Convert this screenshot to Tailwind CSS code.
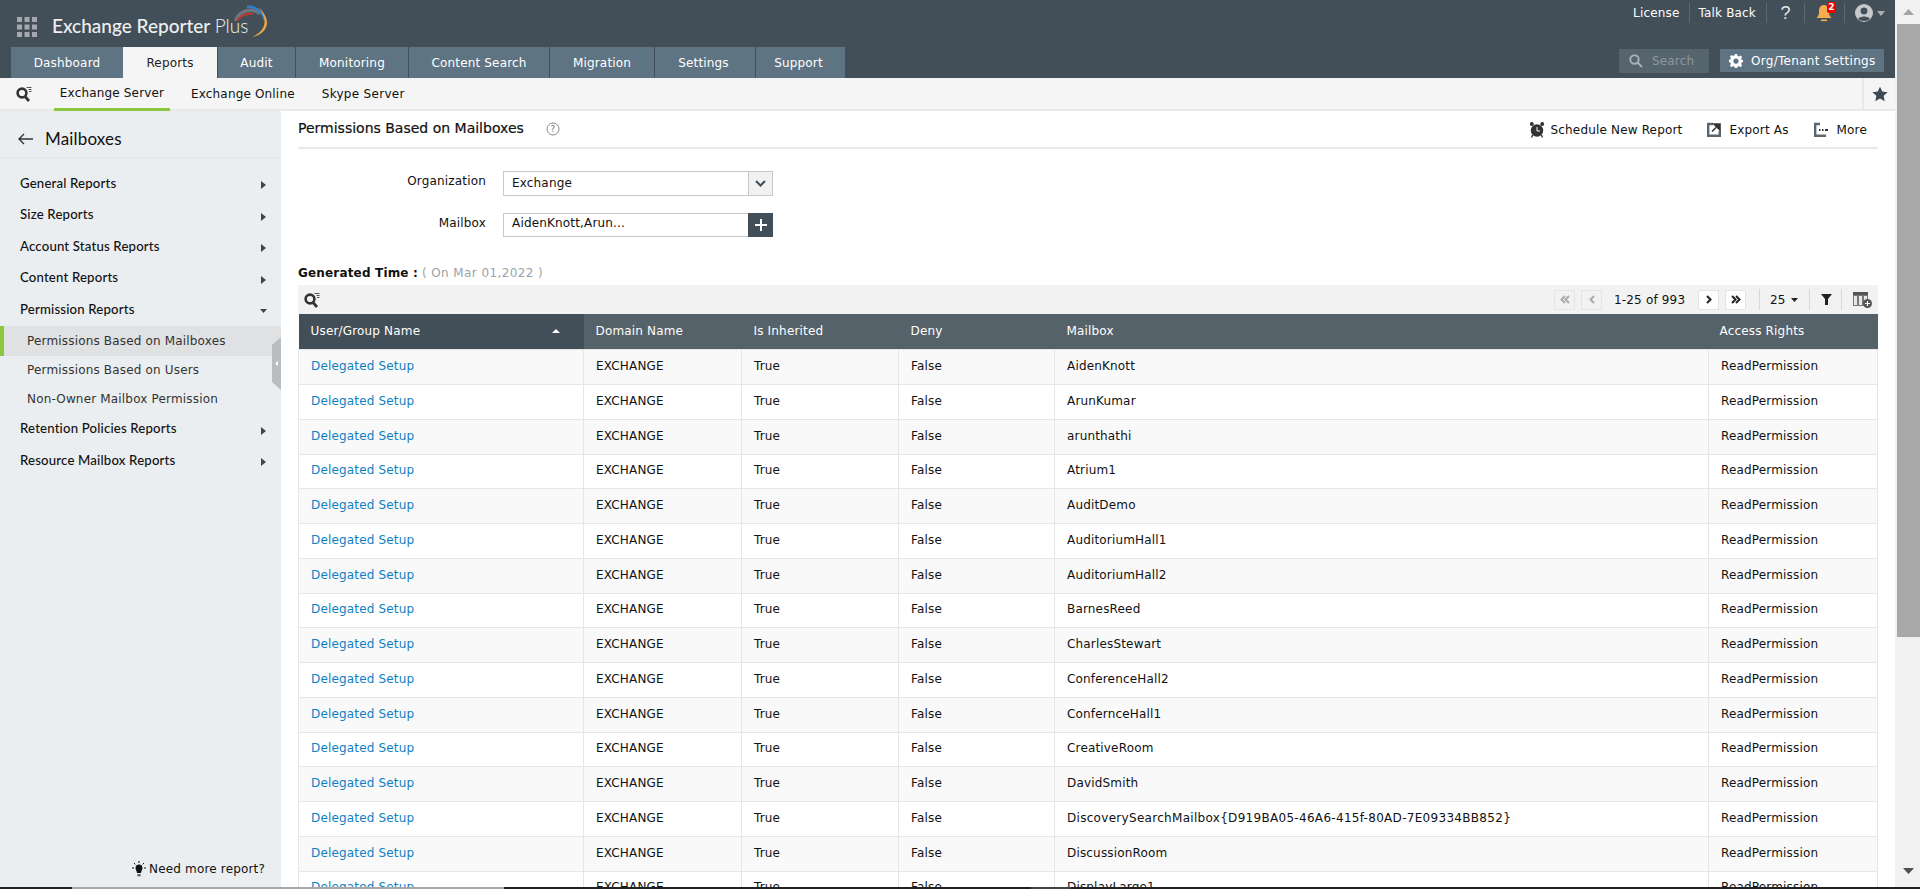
<!DOCTYPE html>
<html>
<head>
<meta charset="utf-8">
<title>Exchange Reporter Plus</title>
<script src="https://cdn.jsdelivr.net/npm/@tailwindcss/browser@4"></script>
</head>
<body class="relative h-[889px] w-[1920px] overflow-hidden bg-white font-['DejaVu_Sans',sans-serif] text-[12px] tracking-[0.17px] text-[#111]">
<div class="flex h-[889px]">
    <div class="flex w-[1895px] flex-col overflow-hidden">

        <!-- top header -->
        <header class="relative h-[78px] shrink-0 bg-[#434f58]">
            <div class="flex h-[47px] items-center pl-[17px] pt-[6px]">
                <svg width="20" height="20" viewBox="0 0 20 20" fill="#a3a9ae">
                    <rect x="0" y="0" width="5" height="5"/><rect x="7.5" y="0" width="5" height="5"/><rect x="15" y="0" width="5" height="5"/>
                    <rect x="0" y="7.5" width="5" height="5"/><rect x="7.5" y="7.5" width="5" height="5"/><rect x="15" y="7.5" width="5" height="5"/>
                    <rect x="0" y="15" width="5" height="5"/><rect x="7.5" y="15" width="5" height="5"/><rect x="15" y="15" width="5" height="5"/>
                </svg>
                <span class="ml-[15px] font-['Lato',sans-serif] text-[19px] font-medium tracking-normal text-[#eef0f1]">Exchange Reporter <span class="font-light">Plus</span></span>
                <svg class="-ml-[14px] -mt-[10px]" width="34" height="34" viewBox="0 0 34 34" fill="none">
                    <path d="M1.5 16 C4 8 15 1 26 8.5" stroke="#6b7680" stroke-width="3.5"/>
                    <path d="M2.5 16 C7 10 13 8 19 9" stroke="#c0392b" stroke-width="1.8"/>
                    <path d="M13 2 C20 0.5 28 6 31 15" stroke="#2f80c8" stroke-width="2.6"/>
                    <path d="M25 3 C30 7 33 13 33 18 C33 25 26 31 18 32 C25 29 30 24 30.5 18 C31 12 28 7 25 3 Z" fill="#eda73f"/>
                </svg>
            </div>

            <nav class="absolute bottom-0 left-[11px] flex h-[31px] text-[12px] text-white">
                <a class="flex w-[112px] items-center justify-center bg-[#5f7482]">Dashboard</a>
                <a class="flex w-[94px] items-center justify-center bg-[#f5f5f5] text-[#222]">Reports</a>
                <a class="flex w-[78px] items-center justify-center border-l border-[#434f58] bg-[#5f7482]">Audit</a>
                <a class="flex w-[113px] items-center justify-center border-l border-[#434f58] bg-[#5f7482]">Monitoring</a>
                <a class="flex w-[141px] items-center justify-center border-l border-[#434f58] bg-[#5f7482]">Content Search</a>
                <a class="flex w-[105px] items-center justify-center border-l border-[#434f58] bg-[#5f7482]">Migration</a>
                <a class="flex w-[101px] items-center justify-center border-l border-[#434f58] bg-[#5f7482] pr-[3px]">Settings</a>
                <a class="flex w-[90px] items-center justify-center border-l border-[#434f58] bg-[#5f7482] pr-[4px]">Support</a>
            </nav>

            <div class="absolute right-[10px] top-[3px] flex h-[20px] items-center text-[12px] text-white">
                <span class="border-r border-[#5d6972] pr-[9px] leading-[20px]">License</span>
                <span class="border-r border-[#5d6972] pl-[9px] pr-[10px] leading-[20px]">Talk Back</span>
                <span class="flex h-[20px] w-[38px] items-center justify-center border-r border-[#5d6972] font-['Liberation_Sans',sans-serif] text-[18px] text-[#e4e6e8]">?</span>
                <span class="relative flex h-[20px] w-[40px] items-center justify-center border-r border-[#5d6972]">
                    <svg class="-ml-[2px]" width="16" height="20" viewBox="0 0 16 20" fill="#f4ad4d"><path d="M8 2 C4 2 3 5 3 9 C3 12 2 13 0.5 15 L15.5 15 C14 13 13 12 13 9 C13 5 12 2 8 2 Z"/><rect x="5" y="16.5" width="6" height="1.6"/></svg>
                    <span class="absolute left-[22px] top-[-1px] flex h-[11px] w-[9px] items-center justify-center rounded-[2px] bg-[#ee0000] text-[9px] font-bold leading-none text-white">2</span>
                </span>
                <svg class="ml-[10px]" width="18" height="18" viewBox="0 0 18 18"><circle cx="9" cy="9" r="9" fill="#c6cacd"/><circle cx="9" cy="7" r="3.4" fill="#434f58"/><path d="M3 15 C4 11.5 14 11.5 15 15 C13 17.5 5 17.5 3 15 Z" fill="#434f58"/></svg>
                <svg class="ml-[4px]" width="8" height="5" viewBox="0 0 8 5" fill="#a9afb3"><path d="M0 0 H8 L4 5 Z"/></svg>
            </div>

            <div class="absolute right-[11px] top-[49px] flex items-start gap-[11px]">
                <div class="flex h-[24px] w-[90px] items-center gap-[9px] bg-[#56646e] pl-[10px] text-[12px] text-[#8d979e]">
                    <svg width="14" height="14" viewBox="0 0 14 14" fill="none" stroke="#a9afb3" stroke-width="2"><circle cx="5.5" cy="5.5" r="4.2"/><path d="M8.5 8.5 L13 13"/></svg>
                    Search
                </div>
                <div class="flex h-[23px] w-[164px] items-center gap-[8px] bg-[#5f7482] pl-[9px] text-[12px] tracking-[0.3px] text-white">
                    <svg width="14" height="14" viewBox="0 0 24 24" fill="#fff"><path d="M10 0 H14 L14.7 3.3 L17 4.3 L19.9 2.5 L22.5 5.1 L20.7 8 L21.7 10.3 L24 10 V14 L21.7 14.7 L20.7 17 L22.5 19.9 L19.9 22.5 L17 20.7 L14.7 21.7 L14 24 H10 L9.3 21.7 L7 20.7 L4.1 22.5 L1.5 19.9 L3.3 17 L2.3 14.7 L0 14 V10 L2.3 9.3 L3.3 7 L1.5 4.1 L4.1 1.5 L7 3.3 L9.3 2.3 Z M12 7.5 A4.5 4.5 0 1 0 12 16.5 A4.5 4.5 0 1 0 12 7.5 Z" fill-rule="evenodd"/></svg>
                    Org/Tenant Settings
                </div>
            </div>
        </header>

        <!-- sub nav -->
        <div class="flex h-[33px] shrink-0 items-stretch border-b-2 border-[#e6e8e9] bg-[#f5f5f5] text-[12px]">
            <div class="flex w-[54px] items-center pl-[16px]">
                <svg width="16" height="16" viewBox="0 0 16 16" fill="none"><circle cx="6" cy="7" r="4.4" stroke="#333" stroke-width="2.6"/><path d="M9 10.5 L13 15" stroke="#333" stroke-width="2.8"/><path d="M10.5 1.5 H15.5 M12.5 3.5 H15.5 M13 5.5 H15.5" stroke="#555" stroke-width="1"/></svg>
            </div>
            <span class="-mb-[2px] flex w-[116px] items-center justify-center border-b-[3px] border-[#8dc63f]">Exchange Server</span>
            <span class="ml-[21px] flex items-center">Exchange Online</span>
            <span class="ml-[27px] flex items-center tracking-[0.3px]">Skype Server</span>
            <span class="ml-auto flex w-[33px] items-center justify-center border-l-2 border-[#e6e8e9]">
                <svg width="16" height="16" viewBox="0 0 24 24" fill="#3f4a53"><path d="M12 1 L15.4 8.3 L23.4 9.3 L17.5 14.8 L19 22.7 L12 18.8 L5 22.7 L6.5 14.8 L0.6 9.3 L8.6 8.3 Z"/></svg>
            </span>
        </div>

        <div class="flex min-h-0 flex-1">
            <!-- sidebar -->
            <aside class="relative w-[281px] shrink-0 bg-[#ebeef0] font-['Lato',sans-serif] text-[13.2px] font-medium text-[#111]">
                <div class="flex h-[47px] items-center border-b border-[#e2e5e7] pl-[18px] pt-[9px] text-[17px] font-normal">
                    <svg width="15" height="12" viewBox="0 0 15 12" fill="none" stroke="#333" stroke-width="1.4"><path d="M15 6 H1 M6 1 L1 6 L6 11"/></svg>
                    <span class="ml-[12px]">Mailboxes</span>
                </div>
                <div class="pt-[10px]">
                    <div class="flex h-[31.5px] items-center justify-between pl-[20px] pr-[15px]">General Reports<svg class="mt-[3px]" width="5" height="8" viewBox="0 0 5 8" fill="#444"><path d="M0 0 L5 4 L0 8 Z"/></svg></div>
                    <div class="flex h-[31.5px] items-center justify-between pl-[20px] pr-[15px]">Size Reports<svg class="mt-[3px]" width="5" height="8" viewBox="0 0 5 8" fill="#444"><path d="M0 0 L5 4 L0 8 Z"/></svg></div>
                    <div class="flex h-[31.5px] items-center justify-between pl-[20px] pr-[15px]">Account Status Reports<svg class="mt-[3px]" width="5" height="8" viewBox="0 0 5 8" fill="#444"><path d="M0 0 L5 4 L0 8 Z"/></svg></div>
                    <div class="flex h-[31.5px] items-center justify-between pl-[20px] pr-[15px]">Content Reports<svg class="mt-[3px]" width="5" height="8" viewBox="0 0 5 8" fill="#444"><path d="M0 0 L5 4 L0 8 Z"/></svg></div>
                    <div class="flex h-[31.5px] items-center justify-between pl-[20px] pr-[14px]">Permission Reports<svg class="mt-[3px]" width="7" height="4" viewBox="0 0 7 4" fill="#444"><path d="M0 0 H7 L3.5 4 Z"/></svg></div>
                    <div class="flex h-[30px] items-center border-l-4 border-[#8dc63f] bg-[#dfe1e3] pl-[23px] font-['DejaVu_Sans',sans-serif] text-[12px] font-normal text-[#333]">Permissions Based on Mailboxes</div>
                    <div class="flex h-[29px] items-center pl-[27px] font-['DejaVu_Sans',sans-serif] text-[12px] font-normal text-[#333]">Permissions Based on Users</div>
                    <div class="flex h-[29px] items-center pl-[27px] font-['DejaVu_Sans',sans-serif] text-[12px] font-normal text-[#333]">Non-Owner Mailbox Permission</div>
                    <div class="flex h-[31.5px] items-center justify-between pl-[20px] pr-[15px]">Retention Policies Reports<svg class="mt-[3px]" width="5" height="8" viewBox="0 0 5 8" fill="#444"><path d="M0 0 L5 4 L0 8 Z"/></svg></div>
                    <div class="flex h-[31.5px] items-center justify-between pl-[20px] pr-[15px]">Resource Mailbox Reports<svg class="mt-[3px]" width="5" height="8" viewBox="0 0 5 8" fill="#444"><path d="M0 0 L5 4 L0 8 Z"/></svg></div>
                </div>
                <!-- collapse handle -->
                <div class="absolute right-0 top-[226px] flex h-[53px] w-[9px] items-center justify-center bg-[#b9bdc0] [clip-path:polygon(0_15%,100%_0,100%_100%,0_85%)]">
                    <svg width="3" height="5" viewBox="0 0 3 5" fill="#fff"><path d="M3 0 V5 L0 2.5 Z"/></svg>
                </div>
                <div class="absolute bottom-[11px] right-[16px] flex items-center gap-[2px] font-['DejaVu_Sans',sans-serif] text-[12px] font-normal">
                    <svg width="16" height="17" viewBox="0 0 16 17" fill="#111"><path d="M8 3.5 C5.5 3.5 4.5 5.2 4.5 7 C4.5 9 6 10 6 12 H10 C10 10 11.5 9 11.5 7 C11.5 5.2 10.5 3.5 8 3.5 Z"/><rect x="6.4" y="13" width="3.2" height="2.4" fill="#666"/><path d="M8 0 V2 M1 7 H3 M13 7 H15 M3 2 L4.4 3.4 M13 2 L11.6 3.4" stroke="#111" stroke-width="1"/></svg>
                    Need more report?
                </div>
            </aside>

            <!-- main -->
            <main class="min-w-0 flex-1 pl-[17px] pr-[17px]">
                <div class="flex h-[38px] items-center justify-between border-b-2 border-[#e6e8e9]">
                    <div class="flex items-center">
                        <h1 class="-mt-[2px] text-[14px] font-normal tracking-normal text-[#111] [-webkit-text-stroke:0.2px_#111]">Permissions Based on Mailboxes</h1>
                        <svg class="ml-[22px]" width="14" height="14" viewBox="0 0 14 14" fill="none"><circle cx="7" cy="7" r="6" stroke="#8a8a8a"/><text x="7" y="10" font-size="9" text-anchor="middle" fill="#777">?</text></svg>
                    </div>
                    <div class="flex items-center pr-[11px] pt-[1px] text-[12px]">
                        <svg width="16" height="17" viewBox="0 0 16 17" fill="#333"><circle cx="8" cy="9.5" r="6.2"/><circle cx="2.8" cy="3" r="2"/><circle cx="13.2" cy="3" r="2"/><path d="M8 6 V10 H11" stroke="#fff" stroke-width="1" fill="none"/><path d="M3.5 14 L2.5 16.5 M12.5 14 L13.5 16.5" stroke="#333" stroke-width="1.4"/></svg>
                        <span class="ml-[6px]">Schedule New Report</span>
                        <svg class="ml-[25px]" width="14" height="15" viewBox="0 0 14 15" fill="none"><path d="M6 2 H1.2 V13.8 H12.8 V9" stroke="#5b6770" stroke-width="2.4"/><path d="M5 9.5 L9 5.5 M7 2 H13 V8 Z" stroke="#333" stroke-width="1.6" fill="#333"/></svg>
                        <span class="ml-[8px]">Export As</span>
                        <svg class="ml-[25px]" width="14" height="15" viewBox="0 0 14 15" fill="none"><path d="M6 2 H1.2 V13.8 H12" stroke="#5b6770" stroke-width="2.4"/><path d="M5 8 H6.5 M8 8 H9.5 M11 8 H14" stroke="#333" stroke-width="2"/></svg>
                        <span class="ml-[9px]">More</span>
                    </div>
                </div>

                <!-- filters -->
                <div class="mt-[22px] flex items-start">
                    <span class="w-[188px] pt-[1px] text-right">Organization</span>
                    <div class="ml-[17px] flex h-[25px] w-[270px] border border-[#c8c8c8] text-[12px]">
                        <span class="flex-1 pl-[8px] leading-[23px]">Exchange</span>
                        <span class="flex w-[24px] items-center justify-center border-l border-[#c8c8c8] bg-[#f1f1f1]">
                            <svg width="11" height="7" viewBox="0 0 11 7" fill="none" stroke="#434f58" stroke-width="2"><path d="M1 1 L5.5 5.5 L10 1"/></svg>
                        </span>
                    </div>
                </div>
                <div class="mt-[17px] flex items-start">
                    <span class="w-[188px] pt-[1px] text-right">Mailbox</span>
                    <div class="ml-[17px] flex h-[24px] w-[270px] border border-[#c8c8c8] text-[12px]">
                        <span class="flex-1 pl-[8px] leading-[18px]">AidenKnott,Arun...</span>
                        <span class="-my-px -mr-px flex w-[25px] items-center justify-center bg-[#434f58]">
                            <svg width="12" height="12" viewBox="0 0 12 12" stroke="#fff" stroke-width="2"><path d="M6 0 V12 M0 6 H12"/></svg>
                        </span>
                    </div>
                </div>

                <div class="mt-[27px] flex h-[18px] items-center font-bold">Generated Time :<span class="ml-[4px] font-normal tracking-[0.4px] text-[#9aa3aa]">( On Mar 01,2022 )</span></div>

                <!-- table toolbar -->
                <div class="mt-[3px] flex h-[29px] items-center bg-[#f2f2f2] pl-[6px]">
                    <svg width="16" height="16" viewBox="0 0 16 16" fill="none"><circle cx="6" cy="7" r="4.4" stroke="#333" stroke-width="2.6"/><path d="M9 10.5 L13 15" stroke="#333" stroke-width="2.8"/><path d="M10.5 1.5 H15.5 M12.5 3.5 H15.5 M13 5.5 H15.5" stroke="#555" stroke-width="1"/></svg>
                    <div class="ml-auto flex items-center text-[12px]">
                        <span class="flex h-[20px] w-[21px] items-center justify-center border border-[#e4e4e4] text-[#aaa]"><svg width="10" height="9" viewBox="0 0 10 9" fill="none" stroke="currentColor" stroke-width="2"><path d="M5 1 L1.5 4.5 L5 8 M9 1 L5.5 4.5 L9 8"/></svg></span>
                        <span class="ml-[6px] flex h-[20px] w-[21px] items-center justify-center border border-[#e4e4e4] text-[#aaa]"><svg width="6" height="9" viewBox="0 0 6 9" fill="none" stroke="currentColor" stroke-width="2"><path d="M5 1 L1.5 4.5 L5 8"/></svg></span>
                        <span class="ml-[12px] w-[84px]">1-25 of 993</span>
                        <span class="flex h-[20px] w-[21px] items-center justify-center border border-[#e4e4e4] bg-white text-[#222]"><svg width="6" height="9" viewBox="0 0 6 9" fill="none" stroke="currentColor" stroke-width="2"><path d="M1 1 L4.5 4.5 L1 8"/></svg></span>
                        <span class="ml-[6px] flex h-[20px] w-[21px] items-center justify-center border border-[#e4e4e4] bg-white text-[#222]"><svg width="10" height="9" viewBox="0 0 10 9" fill="none" stroke="currentColor" stroke-width="2"><path d="M1 1 L4.5 4.5 L1 8 M5 1 L8.5 4.5 L5 8"/></svg></span>
                        <span class="ml-[13px] h-[21px] w-px bg-[#d8d8d8]"></span>
                        <span class="ml-[10px] w-[15px]">25</span>
                        <svg class="ml-[6px]" width="7" height="4" viewBox="0 0 7 4" fill="#222"><path d="M0 0 H7 L3.5 4 Z"/></svg>
                        <span class="ml-[11px] h-[21px] w-px bg-[#d8d8d8]"></span>
                        <svg class="ml-[11px]" width="11" height="11" viewBox="0 0 11 11" fill="#222"><path d="M0 0 H11 L7 5 V11 H4 V5 Z"/></svg>
                        <span class="ml-[9px] h-[21px] w-px bg-[#d8d8d8]"></span>
                        <svg class="ml-[11px] mr-[6px]" width="19" height="16" viewBox="0 0 19 16"><path d="M0 0 H15 V3 H0 Z" fill="#555"/><path d="M0 3 H15 V14 H0 Z" fill="#777"/><path d="M1 4 H4 V13 H1 Z M6 4 H9 V13 H6 Z M11 4 H14 V13 H11 Z" fill="#e8e8e8"/><circle cx="14.5" cy="11.5" r="4.5" fill="#555"/><path d="M12 11.5 H17 M14.5 9 V14" stroke="#fff"/></svg>
                    </div>
                </div>

                <!-- report table -->
                <table class="w-[1580px] table-fixed border-collapse text-[12px]">
                    <thead>
                        <tr class="h-[35px] bg-[#56626a] text-left text-[12px] font-normal text-white">
                            <th class="w-[285px] bg-[#434f58] pl-[12px] font-normal">
                                <span class="flex items-center justify-between pr-[24px]">User/Group Name<svg width="8" height="4" viewBox="0 0 8 4" fill="#fff"><path d="M0 4 H8 L4 0 Z"/></svg></span>
                            </th>
                            <th class="w-[158px] pl-[12px] font-normal">Domain Name</th>
                            <th class="w-[157px] pl-[12px] font-normal">Is Inherited</th>
                            <th class="w-[156px] pl-[12px] font-normal">Deny</th>
                            <th class="w-[654px] pl-[12px] font-normal">Mailbox</th>
                            <th class="pl-[11px] font-normal">Access Rights</th>
                        </tr>
                    </thead>
                    <tbody class="[&_td]:border [&_td]:border-[#e6e6e6] [&_td]:pb-[2px] [&_td]:pl-[12px] [&_tr]:h-[35px] [&_tr:nth-child(4n)]:h-[34px] [&_tr:nth-child(odd)]:bg-[#f9f9f9]">
                        <tr><td class="text-[#0f7fc4]">Delegated Setup</td><td>EXCHANGE</td><td>True</td><td>False</td><td>AidenKnott</td><td>ReadPermission</td></tr>
                        <tr><td class="text-[#0f7fc4]">Delegated Setup</td><td>EXCHANGE</td><td>True</td><td>False</td><td>ArunKumar</td><td>ReadPermission</td></tr>
                        <tr><td class="text-[#0f7fc4]">Delegated Setup</td><td>EXCHANGE</td><td>True</td><td>False</td><td>arunthathi</td><td>ReadPermission</td></tr>
                        <tr><td class="text-[#0f7fc4]">Delegated Setup</td><td>EXCHANGE</td><td>True</td><td>False</td><td>Atrium1</td><td>ReadPermission</td></tr>
                        <tr><td class="text-[#0f7fc4]">Delegated Setup</td><td>EXCHANGE</td><td>True</td><td>False</td><td>AuditDemo</td><td>ReadPermission</td></tr>
                        <tr><td class="text-[#0f7fc4]">Delegated Setup</td><td>EXCHANGE</td><td>True</td><td>False</td><td>AuditoriumHall1</td><td>ReadPermission</td></tr>
                        <tr><td class="text-[#0f7fc4]">Delegated Setup</td><td>EXCHANGE</td><td>True</td><td>False</td><td>AuditoriumHall2</td><td>ReadPermission</td></tr>
                        <tr><td class="text-[#0f7fc4]">Delegated Setup</td><td>EXCHANGE</td><td>True</td><td>False</td><td>BarnesReed</td><td>ReadPermission</td></tr>
                        <tr><td class="text-[#0f7fc4]">Delegated Setup</td><td>EXCHANGE</td><td>True</td><td>False</td><td>CharlesStewart</td><td>ReadPermission</td></tr>
                        <tr><td class="text-[#0f7fc4]">Delegated Setup</td><td>EXCHANGE</td><td>True</td><td>False</td><td>ConferenceHall2</td><td>ReadPermission</td></tr>
                        <tr><td class="text-[#0f7fc4]">Delegated Setup</td><td>EXCHANGE</td><td>True</td><td>False</td><td>ConfernceHall1</td><td>ReadPermission</td></tr>
                        <tr><td class="text-[#0f7fc4]">Delegated Setup</td><td>EXCHANGE</td><td>True</td><td>False</td><td>CreativeRoom</td><td>ReadPermission</td></tr>
                        <tr><td class="text-[#0f7fc4]">Delegated Setup</td><td>EXCHANGE</td><td>True</td><td>False</td><td>DavidSmith</td><td>ReadPermission</td></tr>
                        <tr><td class="text-[#0f7fc4]">Delegated Setup</td><td>EXCHANGE</td><td>True</td><td>False</td><td class="tracking-[0.3px]">DiscoverySearchMailbox{D919BA05-46A6-415f-80AD-7E09334BB852}</td><td>ReadPermission</td></tr>
                        <tr><td class="text-[#0f7fc4]">Delegated Setup</td><td>EXCHANGE</td><td>True</td><td>False</td><td>DiscussionRoom</td><td>ReadPermission</td></tr>
                        <tr><td class="text-[#0f7fc4]">Delegated Setup</td><td>EXCHANGE</td><td>True</td><td>False</td><td>DisplayLarge1</td><td>ReadPermission</td></tr>
                    </tbody>
                </table>
            </main>
        </div>
    </div>

    <!-- page scrollbar -->
    <div class="flex w-[25px] shrink-0 flex-col bg-[#f1f1f1] pl-[2px]">
        <div class="flex h-[24px] w-full items-center justify-center">
            <svg width="11" height="6" viewBox="0 0 11 6" fill="#a3a3a3"><path d="M0 6 H11 L5.5 0 Z"/></svg>
        </div>
        <div class="h-[613px] w-full bg-[#a8a8a8]"></div>
        <div class="mt-auto flex h-[24px] w-full items-start justify-center pb-[2px] pt-[3px]">
            <svg width="11" height="6" viewBox="0 0 11 6" fill="#505050"><path d="M0 0 H11 L5.5 6 Z"/></svg>
        </div>
    </div>
</div>

<!-- window strip along the bottom edge -->
<div class="absolute bottom-0 left-0 flex h-[2px] w-full bg-[#222]">
    <span class="ml-[72px] w-[432px] bg-[#a8a8a8]"></span>
    <span class="ml-[527px] w-[40px] bg-[#444]"></span>
</div>
</body>
</html>
